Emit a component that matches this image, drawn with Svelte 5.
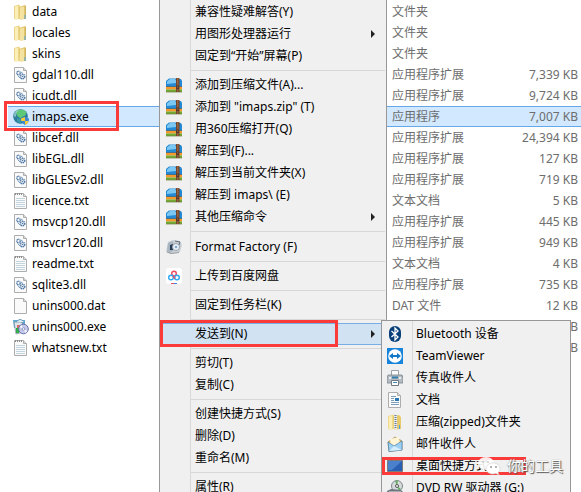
<script>
  const files = [
    ['folder', 'data', '文件夹', ''],
    ['folder', 'locales', '文件夹', ''],
    ['folder', 'skins', '文件夹', ''],
    ['dll', 'gdal110.dll', '应用程序扩展', '7,339 KB'],
    ['dll', 'icudt.dll', '应用程序扩展', '9,724 KB'],
    ['globe', 'imaps.exe', '应用程序', '7,007 KB'],
    ['dll', 'libcef.dll', '应用程序扩展', '24,394 KB'],
    ['dll', 'libEGL.dll', '应用程序扩展', '127 KB'],
    ['dll', 'libGLESv2.dll', '应用程序扩展', '719 KB'],
    ['txt', 'licence.txt', '文本文档', '5 KB'],
    ['dll', 'msvcp120.dll', '应用程序扩展', '445 KB'],
    ['dll', 'msvcr120.dll', '应用程序扩展', '949 KB'],
    ['txt', 'readme.txt', '文本文档', '4 KB'],
    ['dll', 'sqlite3.dll', '应用程序扩展', '735 KB'],
    ['file', 'unins000.dat', 'DAT 文件', '12 KB'],
    ['setup', 'unins000.exe', '', 'KB'],
    ['txt', 'whatsnew.txt', '', 'KB']
  ];

  const groups = [
    [
      { text: '兼容性疑难解答(Y)' },
      { text: '用图形处理器运行', more: true },
      { text: '固定到“开始”屏幕(P)' }
    ],
    [
      { icon: 'zip360', text: '添加到压缩文件(A)...' },
      { icon: 'zip360', text: '添加到 "imaps.zip" (T)' },
      { icon: 'zip360', text: '用360压缩打开(Q)' },
      { icon: 'zip360', text: '解压到(F)...' },
      { icon: 'zip360', text: '解压到当前文件夹(X)' },
      { icon: 'zip360', text: '解压到 imaps\\ (E)' },
      { icon: 'zip360', text: '其他压缩命令', more: true }
    ],
    [{ icon: 'factory', text: 'Format Factory (F)', tall: true }],
    [{ icon: 'baidu', text: '上传到百度网盘' }],
    [{ text: '固定到任务栏(K)' }],
    [{ text: '发送到(N)', more: true, active: true }],
    [{ text: '剪切(T)' }, { text: '复制(C)' }],
    [{ text: '创建快捷方式(S)' }, { text: '删除(D)' }, { text: '重命名(M)' }],
    [{ text: '属性(R)' }]
  ];

  const targets = [
    ['bluetooth', 'Bluetooth 设备'],
    ['teamviewer', 'TeamViewer'],
    ['fax', '传真收件人'],
    ['doc', '文档'],
    ['zipped', '压缩(zipped)文件夹'],
    ['mail', '邮件收件人'],
    ['desktop', '桌面快捷方式'],
    ['dvd', 'DVD RW 驱动器 (G:)']
  ];
</script>

{#snippet icon(name)}
  <svg class="icon" viewBox="0 0 16 16" aria-hidden="true">
    {#if name === 'folder'}
      <path d="M1 2 6 .5 7 2v13l-5 .5-1-1z" fill="#ecd58a" />
      <path d="M2 2.500 5 2v13l-3 .3z" fill="#fbefb8" />
      <path d="M6 3 12 1l1 1v13l-6 .5z" fill="#e3c56c" />
      <path d="M7 3.500 11 2.500v12.500l-4 .4z" fill="#f4e2a0" />
      <path d="M12.500 2v9" stroke="#cfb361" />
      <path d="M12 11v4" stroke="#4ba3dc" />
    {:else if name === 'dll' || name === 'txt' || name === 'file' || name === 'doc'}
      <path d="M1.500.5h9l3 3v12h-12z" fill="#fafafa" stroke="#adadad" />
      <path d="M10.500.5v3h3" fill="#ddd" stroke="#adadad" />
      {#if name === 'dll'}
        <circle cx="5.500" cy="6" r="1.700" fill="#fff" stroke="#4c76a3" stroke-width="1.400" stroke-dasharray="1 .4" />
        <circle cx="9.500" cy="9.500" r="2.200" fill="#fff" stroke="#4c76a3" stroke-width="1.600" stroke-dasharray="1.200 .5" />
        <path d="m4.500 8.500 3 3M8 5l2 1.500" stroke="#7d9fc0" />
        <circle cx="9.500" cy="9.500" r=".8" fill="#4c76a3" />
      {:else if name === 'txt'}
        <path d="M3 5.500h9M3 7.500h9M3 9.500h9M3 11.500h9M3 13.500h9" stroke="#c2d4de" />
        <path d="M2 1h8" stroke="#8c8c8c" stroke-width="2" stroke-dasharray="1 1" />
      {:else if name === 'doc'}
        <path d="M4 4.500h5M4 6.500h3M4 8.500h3M4 10.500h8M4 12.500h8" stroke="#7c9ebb" />
        <path d="M8 6h4v3H8z" fill="#2875b5" />
      {/if}
    {:else if name === 'globe'}
      <circle cx="7.500" cy="7.500" r="7.300" fill="#2d7d9c" />
      <path d="M3 2.500C5 .8 8 .3 11 1.200l2.500 2-1 3-3 1.500-2 1.500-3-2-1-2z" fill="#5cc878" />
      <path d="m4 9 4 1 1 2-2 2.500-3-2z" fill="#3b97a8" />
      <path d="M.7 7c.3-4 3-6 5.500-6.300C4 3 3 4 3 8z" fill="#a9dcd3" opacity=".7" />
      <path d="m12 8 4 1.500c0 3-1 5-4 6.500-3-1.500-4-3.500-4-6.500z" fill="#3e89d0" />
      <path d="M12 8v4H8.300L8 9.500zM12 12h3.500c-.5 2-1.500 3-3.500 4z" fill="#f8cb39" />
    {:else if name === 'setup'}
      <path d="M0 1h12v8H1z" fill="#5da9d2" />
      <path d="M1 3h8l2 10-8 2z" fill="#dfe6ed" stroke="#79899a" stroke-width=".7" />
      <path d="M3 3 7 0l5 3" fill="#d7edf5" stroke="#6e9bb5" />
      <path d="M3 9h3v5H3z" fill="#2fae48" />
      <path d="M4 6h3v3H4z" fill="#d56b63" />
      <circle cx="10.500" cy="10" r="4.800" fill="#c4c8e9" stroke="#6770a8" />
      <path d="m10.500 10-4-2 2-2zM10.500 10l4 2-2 2z" fill="#f4f5ff" />
      <circle cx="10.500" cy="10" r="1.300" fill="#fff" stroke="#777fab" stroke-width=".7" />
    {:else if name === 'zip360'}
      <path d="M0 4 3 1.500h7L12 2h3l1 2v6H0z" fill="#2389d2" />
      <path d="M1 4.500 4 2h5l1 1.500V6L1 7z" fill="#7cc8f3" />
      <path d="M0 9.500h16v3H0z" fill="#f5982c" />
      <path d="M0 12.500h16V15H0z" fill="#71ab35" />
      <path d="M0 9.500h16" stroke="#2a6391" stroke-width=".7" />
      <path d="M0 15h16" stroke="#6e7a35" stroke-width=".7" />
      <path d="M10 1h3.500v14H10z" fill="#70432d" />
      <path d="M11.800 1v7M11.800 12v3" stroke="#a8734c" />
      <path d="M10.500 9h2.500v2.500h-2.500z" fill="#432a20" />
      <path d="M11.300 9.500h1v1h-1z" fill="#e0b585" />
    {:else if name === 'factory'}
      <path d="m2 3 5-2 7 1 2 4-2 7-9 2-5-2z" fill="#cbd0d5" />
      <path d="m2 4 5-2 1 9-4 3-3-2z" fill="#a9b6c2" />
      <path d="m4 6 3-1v6H4z" fill="#283b55" />
      <circle cx="10" cy="8" r="3.500" fill="#eef4f9" stroke="#98a4ae" />
      <path d="m9 2 5 1-1 3" fill="none" stroke="#5f6d7d" />
      <circle cx="10" cy="8" r="1.300" fill="#82a9ca" />
      <path d="m1 13 4 1.500 8-1" fill="none" stroke="#9a9fa4" />
    {:else if name === 'baidu'}
      <rect width="16" height="16" rx="3" fill="#fff" />
      <circle cx="8" cy="5.500" r="2.300" fill="none" stroke="#f14b61" stroke-width="1.500" />
      <circle cx="5" cy="9.500" r="2.300" fill="none" stroke="#32aaf2" stroke-width="1.500" />
      <circle cx="11" cy="9.500" r="2.300" fill="none" stroke="#32aaf2" stroke-width="1.500" />
      <path d="m7 8 2 2.500" stroke="#f14b61" stroke-width="1.500" />
      <path d="M5 15.500h3" stroke="#e55264" />
      <path d="M8 15.500h3" stroke="#3f80e8" />
    {:else if name === 'bluetooth'}
      <rect x="2" y="0" width="12" height="16" rx="6" fill="#073f7b" />
      <path d="m4.500 5 6.500 6-3 3V2l3 3-6.500 6" fill="none" stroke="#fff" stroke-width="1.300" />
    {:else if name === 'teamviewer'}
      <path d="M0 0h16v16H0z" fill="#1784dc" />
      <circle cx="8" cy="8" r="6.800" fill="#fff" />
      <path d="m2 8 4-3v2h4V5l4 3-4 3V9H6v2z" fill="#1378c7" />
    {:else if name === 'fax'}
      <path d="M4.500.5h7v5h-7z" fill="#fcfcfc" stroke="#9ba2a9" />
      <path d="M1 5h14l1 3v5H0V8z" fill="#b4bbc2" stroke="#7a838b" stroke-width=".8" />
      <path d="M2 7h2v2H2zM12 7h2v2h-2z" fill="#e7edf2" />
      <path d="M5 6.500h6v2H5z" fill="#357daa" />
      <path d="M4.500 10.500h7v5h-7z" fill="#fff" stroke="#717b83" />
      <path d="M6 12.500h4" stroke="#4d89b3" />
    {:else if name === 'zipped'}
      <path d="M1 2 7 .5 8 2v13l-6 .5-1-1z" fill="#efd98c" />
      <path d="M6 2 12 1l2 2v12l-7 .5z" fill="#e6ca6b" />
      <path d="M2 2.500 5 2v13l-3 .3z" fill="#fbefb8" />
      <path d="M8.500 1v14" stroke="#e9edf1" stroke-width="3" />
      <path d="M8.500 1v14" stroke="#6e7c8a" stroke-width="2" stroke-dasharray="1 1" />
      <path d="M12.500 11v4" stroke="#4ba3dc" />
    {:else if name === 'mail'}
      <path d="m1 6 7-5 7 4v9L2 15.500z" fill="#e7bb61" stroke="#9c8254" stroke-width=".7" />
      <path d="m3 3 9-2 1 8-9 3z" fill="#fff6d8" />
      <path d="m1 6 6 4 8-5v9L2 15.500z" fill="#9dd0f2" stroke="#427fac" stroke-width=".7" />
      <path d="m2 15 5-5 8 4" fill="#d6edfb" />
    {:else if name === 'desktop'}
      <path d="M.5 2.500h15v11H.5z" fill="#2b5fb4" stroke="#7b7b7b" />
      <path d="M1 3h14L5 12H1z" fill="#4a80cc" />
    {:else if name === 'dvd'}
      <circle cx="10" cy="6" r="5.500" fill="#d6dadd" stroke="#81898e" />
      <path d="m10 6-2-5 3-.4zM10 6l2 5 2-2z" fill="#66ae62" />
      <circle cx="10" cy="6" r="1.500" fill="#fff" stroke="#555" />
      <path d="m0 11 4-2 10 1 2 2v3H0z" fill="#707980" />
      <path d="M2 12h12" stroke="#dce1e3" />
    {/if}
  </svg>
{/snippet}

<main>
  <table>
    <colgroup><col class="name" /><col /><col class="size" /></colgroup>
    <tbody>
      {#each files as [kind, name, type, size]}
        <tr class:selected={kind === 'globe'}>
          <td><span class="file">{@render icon(kind)}{name}</span></td>
          <td class="meta">{type}</td>
          <td class="meta amount">{size}</td>
        </tr>
      {/each}
    </tbody>
  </table>
  <div class="mark file-mark"></div>

  <div class="menu context" role="menu">
    {#each groups as group, i}
      {#if i > 0}<div class="separator"></div>{/if}
      {#each group as item}
        <button role="menuitem" class:active={item.active} class:tall={item.tall}>
          <span class="slot">{#if item.icon}{@render icon(item.icon)}{/if}</span>
          <span class="label">{item.text}</span>
          {#if item.more}<span class="arrow"></span>{/if}
        </button>
      {/each}
    {/each}
  </div>
  <div class="mark send-mark"></div>

  <div class="menu submenu" role="menu">
    {#each targets as [kind, text]}
      <button role="menuitem">
        <span class="slot">{@render icon(kind)}</span>
        <span class="label">{text}</span>
      </button>
    {/each}
  </div>
  <div class="mark desktop-mark"></div>

  <div class="watermark">
    <svg viewBox="0 0 24 20" aria-hidden="true">
      <path d="M9 1C4 1 1 4 1 7.500c0 2 1 4 3 5L3 15l3-1.500 3 .5c5 0 8-3 8-6.500S14 1 9 1z" fill="#fff" fill-opacity=".88" />
      <path d="M16 7c-4 0-7 2.500-7 5.500S12 18 16 18l3-.5 3 1.500-1-2.500c1.500-1 2-2.500 2-4C23 9.500 20 7 16 7z" fill="#fff" stroke="#ccc" stroke-width=".6" />
      <circle cx="6" cy="6" r="1" fill="#ccc" /><circle cx="11" cy="6" r="1" fill="#ccc" />
      <circle cx="14" cy="11" r="1" fill="#999" /><circle cx="19" cy="11" r="1" fill="#999" />
    </svg>
    <span>你的工具</span>
  </div>
</main>

<style>
  :global(body) {
    margin: 0;
    background: #fff;
  }

  main {
    position: relative;
    height: 100vh;
    overflow: hidden;
    font: 12px/20px "Noto Sans", "Noto Sans CJK SC", sans-serif;
    color: #000;
  }

  table {
    width: calc(100% - 8px);
    margin: 1px 0 0 8px;
    table-layout: fixed;
    border-collapse: separate;
    border-spacing: 0;
  }

  .name {
    width: 384px;
  }

  .size {
    width: 80px;
  }

  td {
    height: 21px;
    padding: 0;
    box-sizing: border-box;
    white-space: nowrap;
  }

  .selected td {
    background: #d1e8ff;
    box-shadow: inset 0 1px #66a7e8, inset 0 -1px #66a7e8;
  }

  .file {
    display: flex;
    align-items: center;
    gap: 3px;
    padding-left: 5px;
  }

  .meta {
    color: #6d6d6d;
  }

  .amount {
    padding-right: 3px;
    text-align: right;
  }

  .icon {
    flex: none;
    width: 16px;
    height: 16px;
  }

  .menu {
    position: absolute;
    box-sizing: border-box;
    background: linear-gradient(90deg, transparent 30px, #d9d9d9 30px, #d9d9d9 31px, transparent 31px) #f0f0f0;
    border: 1px solid #979797;
  }

  .context {
    top: 0;
    left: 159px;
    width: 228px;
    padding-top: 1px;
    border-top: 0;
  }

  .submenu {
    top: 320px;
    left: 381px;
    width: 190px;
    padding-top: 2px;
  }

  button {
    display: flex;
    align-items: center;
    width: 100%;
    height: 22px;
    padding: 0 11px 0 6px;
    border: 0;
    background: none;
    font: inherit;
    color: inherit;
    text-align: left;
    white-space: nowrap;
  }

  .submenu button {
    padding-left: 5px;
  }

  .tall {
    height: 23px;
  }

  .active {
    background: #d1e2f2;
    box-shadow: inset 0 1px #78aee5, inset 0 -1px #78aee5;
  }

  .slot {
    display: flex;
    flex: none;
    width: 29px;
  }

  .label {
    flex: 1;
  }

  .arrow {
    border: 4px solid transparent;
    border-left-color: #222;
    border-right: 0;
  }

  .separator {
    height: 1px;
    margin: 3px 1px 3px 31px;
    background: #d7d7d7;
  }

  .mark {
    position: absolute;
    box-sizing: border-box;
    border: 3px solid #fb3a3a;
    pointer-events: none;
  }

  .file-mark {
    top: 101px;
    left: 4px;
    width: 115px;
    height: 30px;
  }

  .send-mark {
    top: 320px;
    left: 160px;
    width: 178px;
    height: 27px;
  }

  .desktop-mark {
    top: 457px;
    left: 382px;
    width: 144px;
    height: 18px;
  }

  .watermark {
    position: absolute;
    top: 456px;
    left: 477px;
    display: flex;
    align-items: center;
    gap: 6px;
    font-size: 14px;
    color: #fff;
    text-shadow: 1px 1px 1px #555, 0 0 1px #777;
  }

  .watermark svg {
    width: 24px;
    height: 20px;
  }
</style>
